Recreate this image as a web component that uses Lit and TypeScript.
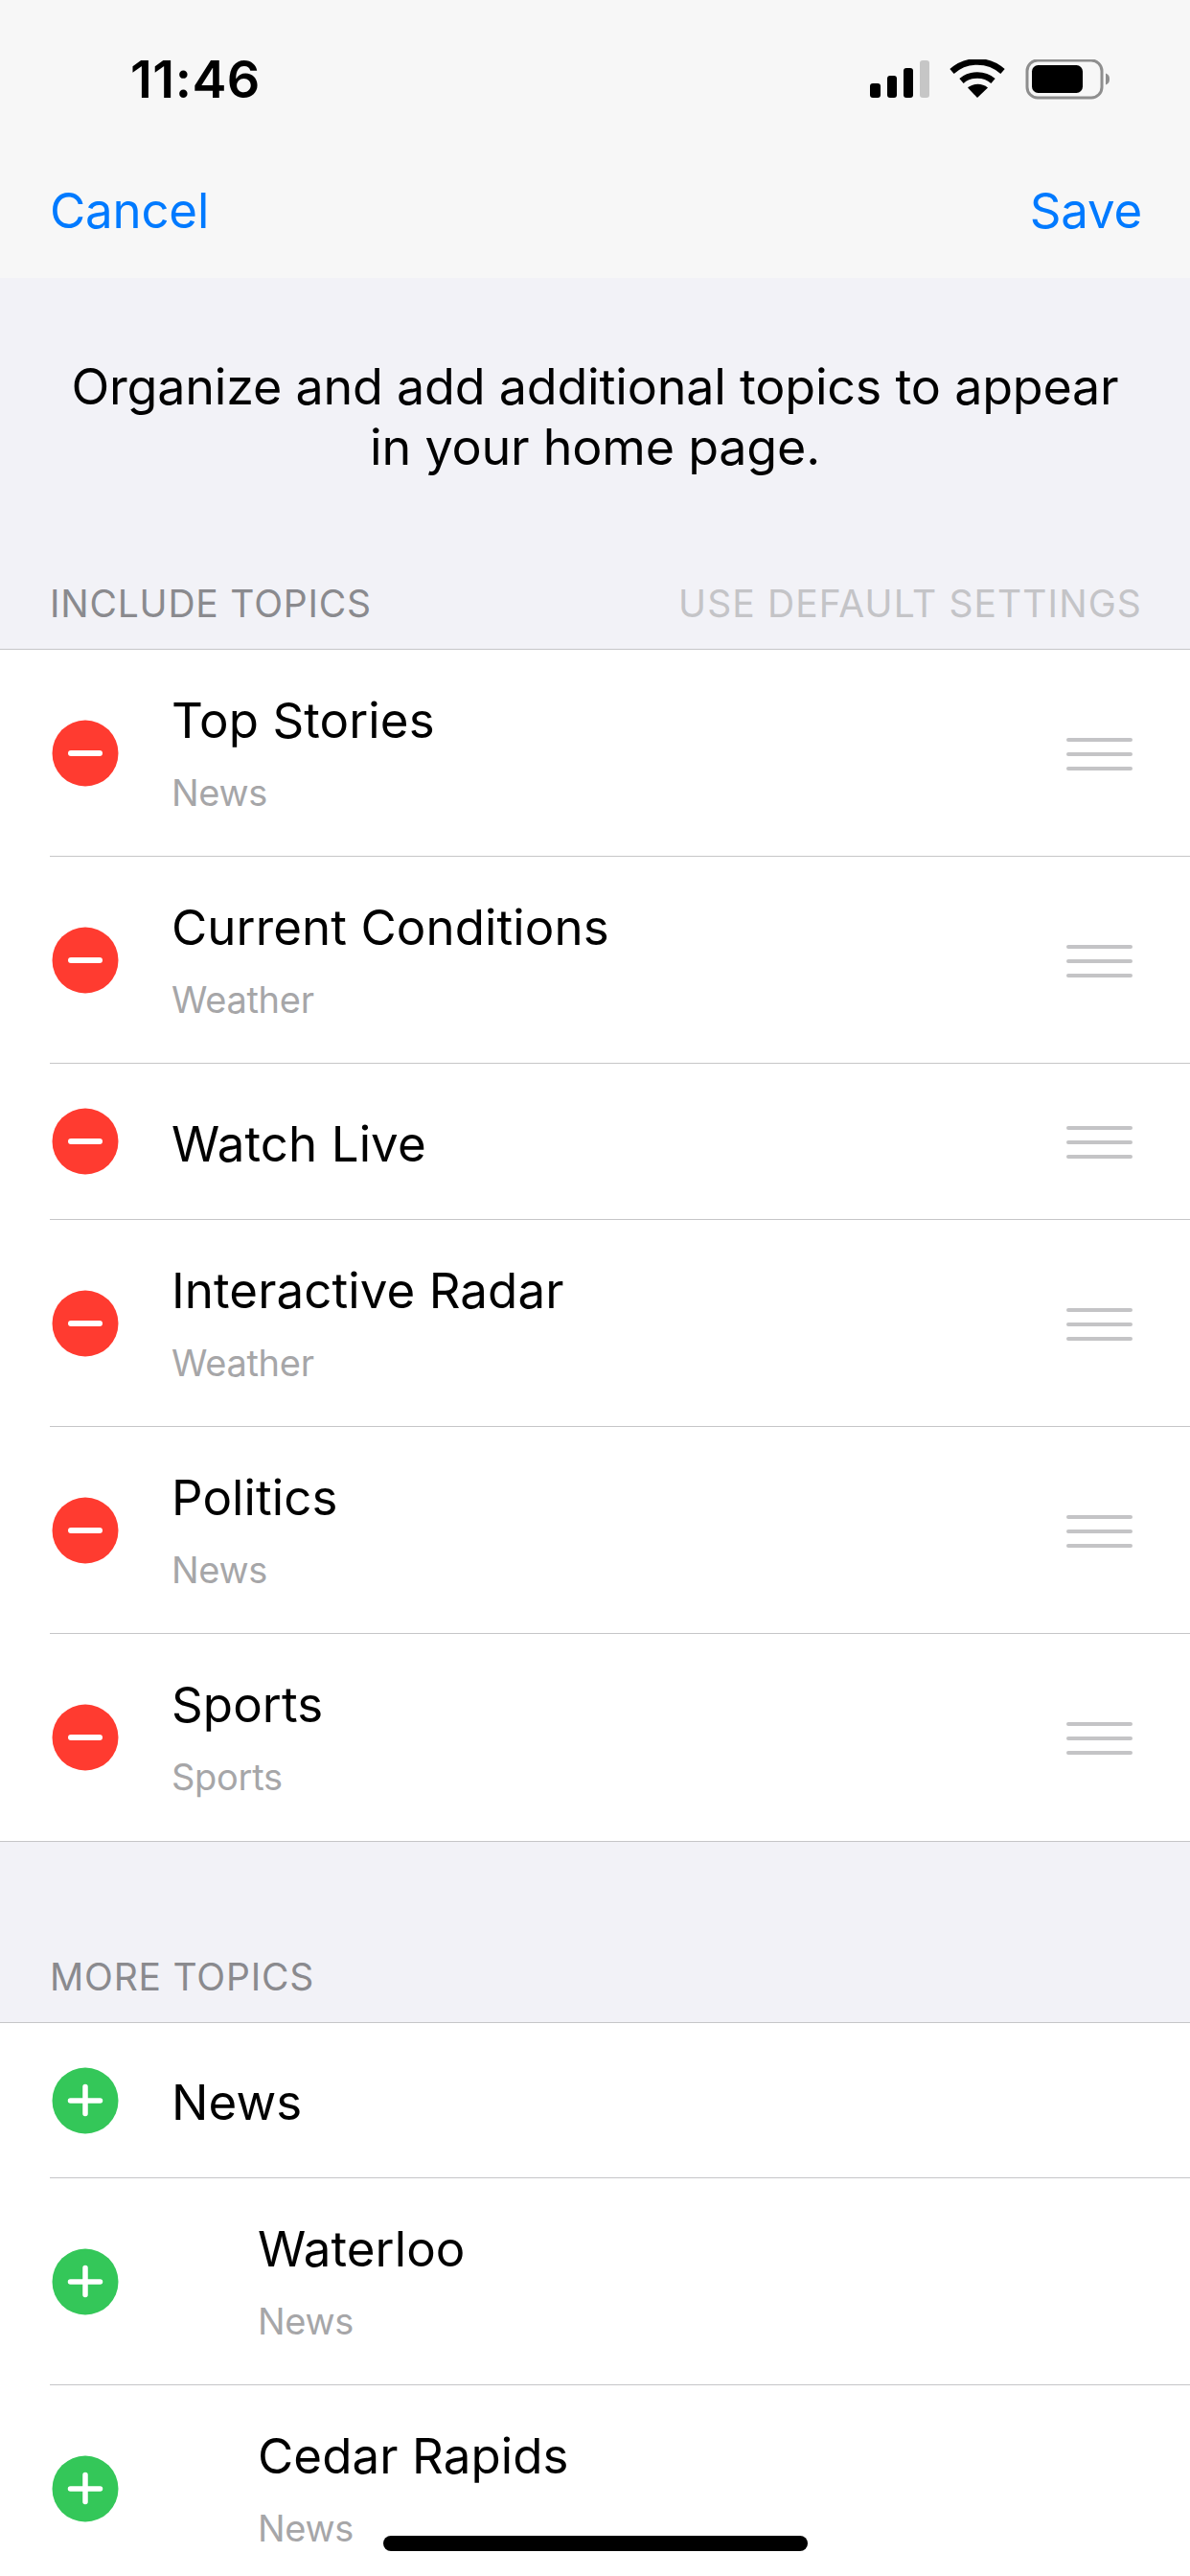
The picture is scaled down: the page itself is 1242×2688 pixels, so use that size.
import { LitElement, html, css, svg } from "lit";
import { customElement } from "lit/decorators.js";

type Row = { title: string; sub?: string; indent?: boolean };

const included: Row[] = [
  { title: "Top Stories", sub: "News" },
  { title: "Current Conditions", sub: "Weather" },
  { title: "Watch Live" },
  { title: "Interactive Radar", sub: "Weather" },
  { title: "Politics", sub: "News" },
  { title: "Sports", sub: "Sports" },
];
const more: Row[] = [
  { title: "News" },
  { title: "Waterloo", sub: "News", indent: true },
  { title: "Cedar Rapids", sub: "News", indent: true },
];

@customElement("app-root")
export class AppRoot extends LitElement {
  static styles = css`
    :host {
      display: block;
      position: relative;
      width: 1242px;
      height: 2688px;
      overflow: hidden;
      background: #f2f2f7;
      font-family: Inter, "Noto Sans", sans-serif;
      color: #000;
    }
    .top { background: #f7f7f7; height: 290px; display: flex; flex-direction: column; }
    .status { height: 166px; display: flex; justify-content: space-between; align-items: flex-start; flex: none; }
    .time { margin: 59px 0 0 136px; font-size: 54px; line-height: 48px; font-weight: 600; letter-spacing: 0.5px; }
    .sysicons { margin: 62px 0 0 0; width: 344px; flex: none; }
    .sysicons svg { display: block; }
    .nav { display: flex; justify-content: space-between; padding: 0 50px 0 52px; font-size: 51px; line-height: 60px; color: #007aff; margin-top: 24px; letter-spacing: -0.2px; }
    .intro { height: 297px; box-sizing: border-box; padding: 82px 60px 0; text-align: center; font-size: 52px; line-height: 63px; letter-spacing: -0.2px; }
    .head { display: flex; justify-content: space-between; align-items: flex-end; padding: 0 50px 22px 52px; font-size: 39px; line-height: 50px; letter-spacing: 0.8px; color: #8a8a8e; box-sizing: border-box; }
    .head.first { height: 90px; }
    .head.second { height: 110px; margin-top: 78px; }
    .head .action { color: #c4c4c7; letter-spacing: 1.1px; }
    .list { background: #fff; border-top: 1px solid #c6c6c8; border-bottom: 1px solid #c6c6c8; }
    .row { display: flex; align-items: center; height: 215px; margin-bottom: 1px; padding-left: 52px; position: relative; }
    .row.short { height: 162px; }
    .list.more .row.short { height: 161px; }
    .row::after { content: ""; position: absolute; left: 52px; right: 0; bottom: -1px; height: 1px; background: #c6c6c8; }
    .row:last-child::after { display: none; }
    .badge { width: 70px; height: 70px; margin-left: 2px; flex: none; display: block; }
    .text { margin-left: 55px; padding-top: 2px; flex: 1; display: flex; flex-direction: column; }
    .row.short .text { padding-top: 5px; }
    .row.indent .text { margin-left: 145px; }
    .title { font-size: 51px; line-height: 60px; letter-spacing: 0.1px; }
    .sub { font-size: 38px; line-height: 48px; margin-top: 21px; color: #a6a6a8; letter-spacing: -0.3px; }
    .grip { width: 69px; margin: 2px 60px 0 0; flex: none; display: flex; flex-direction: column; gap: 11px; }
    .grip i { display: block; height: 4px; border-radius: 2px; background: #c4c4c6; }
    .home { position: absolute; left: 400px; top: 2646px; width: 443px; height: 16px; border-radius: 8px; background: #000; }
  `;

  private badge(add: boolean) {
    const fill = add ? "#34c759" : "#ff3b30";
    return html`<svg class="badge" viewBox="0 0 70 70" aria-hidden="true">
      <circle cx="35" cy="35" r="34.5" fill=${fill}></circle>
      ${add
        ? svg`<path d="M35 20.5v28M19.5 35h31" stroke="#fff" stroke-width="5.5" stroke-linecap="round" fill="none"></path>`
        : svg`<path d="M20 35h30" stroke="#fff" stroke-width="6" stroke-linecap="round" fill="none"></path>`}
    </svg>`;
  }

  private row(r: Row, add: boolean) {
    return html`<div class="row ${r.sub ? "" : "short"} ${r.indent ? "indent" : ""}">
      ${this.badge(add)}
      <div class="text">
        <div class="title">${r.title}</div>
        ${r.sub ? html`<div class="sub">${r.sub}</div>` : ""}
      </div>
      ${add ? "" : html`<div class="grip"><i></i><i></i><i></i></div>`}
    </div>`;
  }

  render() {
    return html`
      <div class="top">
        <div class="status">
          <div class="time">11:46</div>
          <div class="sysicons">
            <svg width="344" height="42" viewBox="0 0 344 42" aria-hidden="true">
              <rect x="10" y="25" width="11" height="15" rx="3" fill="#000"></rect>
              <rect x="28" y="17" width="10" height="23" rx="3" fill="#000"></rect>
              <rect x="45" y="9" width="10" height="31" rx="3" fill="#000"></rect>
              <rect x="62" y="1" width="10" height="39" rx="3" fill="#c6c6c6"></rect>
              <path d="M96 11.5C111 -2 134 -2 149 11.5" transform="translate(-.5 1)" stroke="#000" stroke-width="6.5" fill="none"></path>
              <path d="M106 21.5C115 13.5 130 13.5 139 21.5" stroke="#000" stroke-width="6.5" fill="none" transform="translate(-.5 1)"></path>
              <path d="M122 40L112 29.5C118 24.5 127 24.5 133 29.5Z" fill="#000"></path>
              <rect x="174" y="1" width="78" height="39" rx="11" fill="none" stroke="#8e8e8e" stroke-width="3"></rect>
              <rect x="179" y="6" width="53" height="29" rx="6.5" fill="#000"></rect>
              <path d="M256 14.5c3 1 4 3 4 6s-1 5-4 6z" fill="#8e8e8e"></path>
            </svg>
          </div>
        </div>
        <div class="nav"><span>Cancel</span><span>Save</span></div>
      </div>
      <div class="intro">Organize and add additional topics to appear in your home page.</div>
      <div class="head first"><span>INCLUDE TOPICS</span><span class="action">USE DEFAULT SETTINGS</span></div>
      <div class="list">${included.map((r) => this.row(r, false))}</div>
      <div class="head second"><span>MORE TOPICS</span></div>
      <div class="list more">${more.map((r) => this.row(r, true))}</div>
      <div class="home"></div>
    `;
  }
}
